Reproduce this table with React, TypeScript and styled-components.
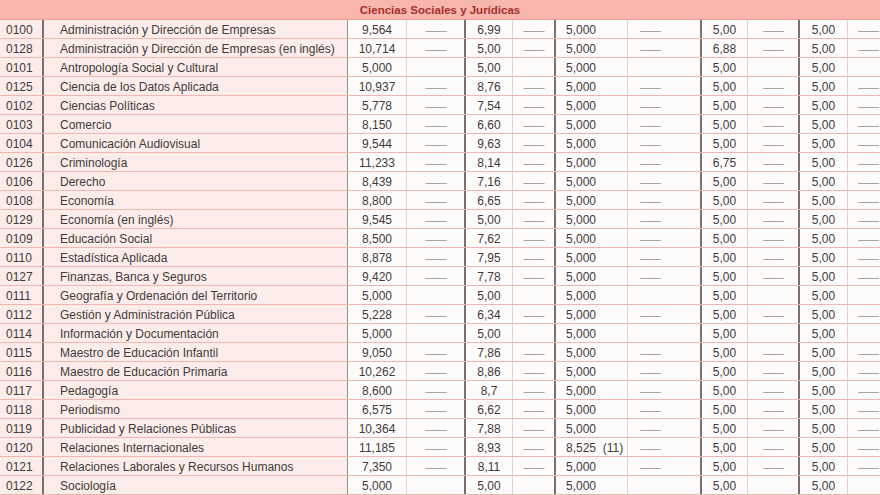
import React, { FC } from "react";
import styled, { createGlobalStyle } from "styled-components";

const GlobalStyle = createGlobalStyle`
  html, body {
    margin: 0;
    padding: 0;
    background: #ffffff;
    overflow: hidden;
  }
  body {
    font-family: "Liberation Sans", Arial, sans-serif;
  }
`;

type Row = {
  code: string;
  name: string;
  a: string;
  b: string;
  c: string;
  d: string;
  e: string;
  dash: boolean;
};

const rows: Row[] = [
  { code: "0100", name: "Administración y Dirección de Empresas", a: "9,564", b: "6,99", c: "5,000", d: "5,00", e: "5,00", dash: true },
  { code: "0128", name: "Administración y Dirección de Empresas (en inglés)", a: "10,714", b: "5,00", c: "5,000", d: "6,88", e: "5,00", dash: true },
  { code: "0101", name: "Antropología Social y Cultural", a: "5,000", b: "5,00", c: "5,000", d: "5,00", e: "5,00", dash: false },
  { code: "0125", name: "Ciencia de los Datos Aplicada", a: "10,937", b: "8,76", c: "5,000", d: "5,00", e: "5,00", dash: true },
  { code: "0102", name: "Ciencias Políticas", a: "5,778", b: "7,54", c: "5,000", d: "5,00", e: "5,00", dash: true },
  { code: "0103", name: "Comercio", a: "8,150", b: "6,60", c: "5,000", d: "5,00", e: "5,00", dash: true },
  { code: "0104", name: "Comunicación Audiovisual", a: "9,544", b: "9,63", c: "5,000", d: "5,00", e: "5,00", dash: true },
  { code: "0126", name: "Criminología", a: "11,233", b: "8,14", c: "5,000", d: "6,75", e: "5,00", dash: true },
  { code: "0106", name: "Derecho", a: "8,439", b: "7,16", c: "5,000", d: "5,00", e: "5,00", dash: true },
  { code: "0108", name: "Economía", a: "8,800", b: "6,65", c: "5,000", d: "5,00", e: "5,00", dash: true },
  { code: "0129", name: "Economía (en inglés)", a: "9,545", b: "5,00", c: "5,000", d: "5,00", e: "5,00", dash: true },
  { code: "0109", name: "Educación Social", a: "8,500", b: "7,62", c: "5,000", d: "5,00", e: "5,00", dash: true },
  { code: "0110", name: "Estadística Aplicada", a: "8,878", b: "7,95", c: "5,000", d: "5,00", e: "5,00", dash: true },
  { code: "0127", name: "Finanzas, Banca y Seguros", a: "9,420", b: "7,78", c: "5,000", d: "5,00", e: "5,00", dash: true },
  { code: "0111", name: "Geografía y Ordenación del Territorio", a: "5,000", b: "5,00", c: "5,000", d: "5,00", e: "5,00", dash: false },
  { code: "0112", name: "Gestión y Administración Pública", a: "5,228", b: "6,34", c: "5,000", d: "5,00", e: "5,00", dash: true },
  { code: "0114", name: "Información y Documentación", a: "5,000", b: "5,00", c: "5,000", d: "5,00", e: "5,00", dash: false },
  { code: "0115", name: "Maestro de Educación Infantil", a: "9,050", b: "7,86", c: "5,000", d: "5,00", e: "5,00", dash: true },
  { code: "0116", name: "Maestro de Educación Primaria", a: "10,262", b: "8,86", c: "5,000", d: "5,00", e: "5,00", dash: true },
  { code: "0117", name: "Pedagogía", a: "8,600", b: "8,7", c: "5,000", d: "5,00", e: "5,00", dash: true },
  { code: "0118", name: "Periodismo", a: "6,575", b: "6,62", c: "5,000", d: "5,00", e: "5,00", dash: true },
  { code: "0119", name: "Publicidad y Relaciones Públicas", a: "10,364", b: "7,88", c: "5,000", d: "5,00", e: "5,00", dash: true },
  { code: "0120", name: "Relaciones Internacionales", a: "11,185", b: "8,93", c: "8,525  (11)", d: "5,00", e: "5,00", dash: true },
  { code: "0121", name: "Relaciones Laborales y Recursos Humanos", a: "7,350", b: "8,11", c: "5,000", d: "5,00", e: "5,00", dash: true },
  { code: "0122", name: "Sociología", a: "5,000", b: "5,00", c: "5,000", d: "5,00", e: "5,00", dash: false },
];

const Sheet = styled.div`
  width: 880px;
  height: 495px;
  overflow: hidden;
  background: #ffffff;
  color: #403b3b;
  font-size: 12px;
`;

const Banner = styled.div`
  height: 20px;
  box-sizing: border-box;
  background: #f9b6ac;
  border-bottom: 1px solid #eba097;
  display: flex;
  align-items: center;
  justify-content: center;
  color: #a3302c;
  font-size: 11.5px;
  font-weight: bold;
`;

const Line = styled.div`
  display: grid;
  grid-template-columns: 44px 304px 59px 59px 47px 43px 72px 74px 46px 52px 48px 40px;
  height: 19px;
  box-sizing: border-box;
  border-bottom: 1px solid #f0b7b0;
`;

const borders = {
  dark: "2px solid #7d6d6d",
  mid: "1px solid #9c8e8e",
  light: "1px solid #e6cfcd",
  none: "none",
};

const Cell = styled.div<{
  $edge: keyof typeof borders;
  $align?: "left" | "center";
  $pad?: number;
  $tint?: boolean;
}>`
  box-sizing: border-box;
  border-right: ${(p) => borders[p.$edge]};
  background: ${(p) => (p.$tint ? "#fcedea" : "#fefbfb")};
  text-align: ${(p) => p.$align ?? "center"};
  padding-left: ${(p) => p.$pad ?? 0}px;
  padding-top: 1px;
  line-height: 18px;
  white-space: pre;
  overflow: hidden;
`;

const Dash = styled.span`
  color: #959090;
  font-size: 11px;
  letter-spacing: -1px;
`;

const Rule: FC<{ show: boolean }> = ({ show }) => (show ? <Dash>——</Dash> : null);

export default function App() {
  return (
    <Sheet>
      <GlobalStyle />
      <Banner>Ciencias Sociales y Jurídicas</Banner>
      {rows.map((r) => (
        <Line key={r.code}>
          <Cell $edge="dark" $align="left" $pad={6} $tint>
            {r.code}
          </Cell>
          <Cell $edge="mid" $align="left" $pad={16} $tint>
            {r.name}
          </Cell>
          <Cell $edge="light">{r.a}</Cell>
          <Cell $edge="dark">
            <Rule show={r.dash} />
          </Cell>
          <Cell $edge="light">{r.b}</Cell>
          <Cell $edge="dark">
            <Rule show={r.dash} />
          </Cell>
          <Cell $edge="light" $align="left" $pad={10}>
            {r.c}
          </Cell>
          <Cell $edge="dark" $align="left" $pad={12}>
            <Rule show={r.dash} />
          </Cell>
          <Cell $edge="light">{r.d}</Cell>
          <Cell $edge="dark">
            <Rule show={r.dash} />
          </Cell>
          <Cell $edge="light">{r.e}</Cell>
          <Cell $edge="none" $align="left" $pad={10}>
            <Rule show={r.dash} />
          </Cell>
        </Line>
      ))}
    </Sheet>
  );
}
